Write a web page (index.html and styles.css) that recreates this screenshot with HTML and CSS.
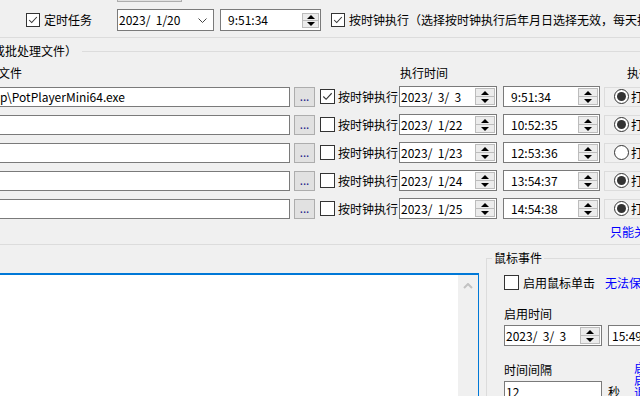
FILE: index.html
```html
<!DOCTYPE html>
<html lang="zh-CN">
<head>
    <meta charset="UTF-8">
    <title>定时任务</title>
    <link rel="stylesheet" href="styles.css">
</head>
<body>
    <div class="window">
        <div class="stub"></div>

        <div class="task-row">
            <label class="check top-check">
                <span class="box small checked"><svg viewBox="0 0 14 14"><polyline points="2.5,7 5.5,10 11.5,3.5"/></svg></span>
                定时任务
            </label>
            <div class="field top-date">
                <span class="val">2023/  1/20</span>
                <svg class="chevron" viewBox="0 0 9 5"><polyline points="0.5,0.5 4.5,4.5 8.5,0.5"/></svg>
            </div>
            <div class="field top-time">
                <span class="val right">9:51:34</span>
                <span class="spin small"><i class="up"></i><i class="down"></i></span>
            </div>
            <label class="check clock-check">
                <span class="box small checked"><svg viewBox="0 0 14 14"><polyline points="2.5,7 5.5,10 11.5,3.5"/></svg></span>
                按时钟执行（选择按时钟执行后年月日选择无效，每天按指定时间执行）
            </label>
        </div>

        <div class="group-edge"></div>

        <div class="group-title">
            <span class="title-text">或批处理文件）</span>
            <span class="title-line"></span>
        </div>

        <div class="head-row">
            <span class="h-file">文件</span>
            <span class="h-time">执行时间</span>
            <span class="h-run">执行方式</span>
        </div>

        <div class="rows">
            <div class="row">
                <div class="field file"><span class="val">p\PotPlayerMini64.exe</span></div>
                <button class="browse">...</button>
                <label class="check row-check">
                    <span class="box checked"><svg viewBox="0 0 14 14"><polyline points="2.5,7 5.5,10 11.5,3.5"/></svg></span>
                    按时钟执行
                </label>
                <div class="field date"><span class="val">2023/  3/  3</span><span class="spin"><i class="up"></i><i class="down"></i></span></div>
                <div class="field time"><span class="val right">9:51:34</span><span class="spin"><i class="up"></i><i class="down"></i></span></div>
                <div class="radio-cell"><span class="radio on"></span>打开</div>
            </div>
            <div class="row">
                <div class="field file"><span class="val"></span></div>
                <button class="browse">...</button>
                <label class="check row-check"><span class="box"></span>按时钟执行</label>
                <div class="field date"><span class="val">2023/  1/22</span><span class="spin"><i class="up"></i><i class="down"></i></span></div>
                <div class="field time"><span class="val right">10:52:35</span><span class="spin"><i class="up"></i><i class="down"></i></span></div>
                <div class="radio-cell"><span class="radio on"></span>打开</div>
            </div>
            <div class="row">
                <div class="field file"><span class="val"></span></div>
                <button class="browse">...</button>
                <label class="check row-check"><span class="box"></span>按时钟执行</label>
                <div class="field date"><span class="val">2023/  1/23</span><span class="spin"><i class="up"></i><i class="down"></i></span></div>
                <div class="field time"><span class="val right">12:53:36</span><span class="spin"><i class="up"></i><i class="down"></i></span></div>
                <div class="radio-cell"><span class="radio"></span>打开</div>
            </div>
            <div class="row">
                <div class="field file"><span class="val"></span></div>
                <button class="browse">...</button>
                <label class="check row-check"><span class="box"></span>按时钟执行</label>
                <div class="field date"><span class="val">2023/  1/24</span><span class="spin"><i class="up"></i><i class="down"></i></span></div>
                <div class="field time"><span class="val right">13:54:37</span><span class="spin"><i class="up"></i><i class="down"></i></span></div>
                <div class="radio-cell"><span class="radio on"></span>打开</div>
            </div>
            <div class="row">
                <div class="field file"><span class="val"></span></div>
                <button class="browse">...</button>
                <label class="check row-check"><span class="box"></span>按时钟执行</label>
                <div class="field date"><span class="val">2023/  1/25</span><span class="spin"><i class="up"></i><i class="down"></i></span></div>
                <div class="field time"><span class="val right">14:54:38</span><span class="spin"><i class="up"></i><i class="down"></i></span></div>
                <div class="radio-cell"><span class="radio on"></span>打开</div>
            </div>
        </div>

        <div class="note"><span class="link">只能关闭</span></div>

        <div class="group-edge bottom-edge"></div>

        <div class="lower">
            <div class="log">
                <div class="scrollbar">
                    <svg class="scroll-up" viewBox="0 0 10 6"><polyline points="1,5 5,1 9,5"/></svg>
                </div>
            </div>

            <div class="mouse-group">
                <span class="legend">鼠标事件</span>
                <div class="mouse-check">
                    <label class="check"><span class="box"></span>启用鼠标单击</label>
                    <span class="link warn">无法保存</span>
                </div>
                <div class="label start-label">启用时间</div>
                <div class="pair">
                    <div class="field date"><span class="val">2023/  3/  3</span><span class="spin"><i class="up"></i><i class="down"></i></span></div>
                    <div class="field time-cut"><span class="val">15:49:20</span></div>
                </div>
                <div class="interval">
                    <div class="interval-main">
                        <div class="label">时间间隔</div>
                        <div class="pair">
                            <div class="field date"><span class="val">12</span></div>
                            <span class="unit">秒</span>
                        </div>
                    </div>
                    <span class="link vertical">启启退</span>
                </div>
            </div>
        </div>
    </div>
</body>
</html>
```

FILE: styles.css
```css
body {
    margin: 0;
    font-family: "Noto Sans CJK SC", "Noto Sans", sans-serif;
    font-size: 12px;
    line-height: 14px;
    color: #000;
    background: #f0f0f0;
}
.window {
    width: 640px;
    height: 396px;
    overflow: hidden;
    background: #f0f0f0;
    white-space: nowrap;
}
.stub {
    margin-left: 117px;
    width: 63px;
    height: 1px;
    background: #e1e1e1;
    border: 1px solid #adadad;
    border-top: none;
}

/* generic controls */
.field {
    display: flex;
    align-items: center;
    flex: none;
    box-sizing: border-box;
    height: 21px;
    border: 1px solid #7a7a7a;
    background: #fff;
}
.val {
    flex: 1;
    padding-left: 1px;
    white-space: pre;
}
.val.right {
    flex: none;
    width: 36px;
    margin-left: 6px;
    text-align: right;
}
.check {
    display: flex;
    align-items: center;
    flex: none;
    gap: 4px;
}
.box {
    box-sizing: border-box;
    width: 15px;
    height: 15px;
    border: 1px solid #333;
    background: #fff;
    flex: none;
}
.box.small {
    width: 14px;
    height: 14px;
}
.box svg {
    display: block;
    width: 100%;
    height: 100%;
}
.box svg polyline {
    fill: none;
    stroke: #333;
    stroke-width: 1.2;
}
.spin {
    display: flex;
    flex-direction: column;
    width: 20px;
    height: 17px;
    margin-left: auto;
    margin-right: 1px;
    flex: none;
}
.spin.small {
    width: 17px;
    height: 15px;
}
.spin i {
    flex: 1;
    display: flex;
    align-items: center;
    justify-content: center;
    background: #ececec;
    border: 1px solid #bcbcbc;
}
.spin i + i {
    border-top: none;
}
.spin i::before {
    content: "";
    border-left: 4px solid transparent;
    border-right: 4px solid transparent;
}
.spin .up::before {
    border-bottom: 4px solid #000;
}
.spin .down::before {
    border-top: 4px solid #000;
}
.link {
    color: #0000ff;
}

/* top row */
.task-row {
    display: flex;
    align-items: center;
    height: 22px;
    margin-top: 7px;
}
.top-check {
    margin-left: 26px;
    width: 91px;
}
.top-date {
    width: 97px;
    height: 22px;
}
.top-date .val {
    flex: none;
}
.chevron {
    width: 9px;
    height: 5px;
    margin: 0 6px 0 auto;
}
.chevron polyline {
    fill: none;
    stroke: #444;
    stroke-width: 1;
}
.top-time {
    width: 101px;
    height: 22px;
    margin-left: 6px;
}
.clock-check {
    margin-left: 10px;
}

.group-edge {
    height: 1px;
    background: #dcdcdc;
    margin-top: 6px;
}
.group-title {
    display: flex;
    align-items: center;
    margin-top: 6px;
}
.title-text {
    flex: none;
    margin-left: -7px;
}
.title-line {
    flex: 1;
    height: 1px;
    margin-left: 5px;
    background: #dcdcdc;
}

/* batch rows */
.head-row {
    display: flex;
    margin-top: 8px;
}
.head-row span {
    flex: none;
}
.h-file {
    margin-left: -2px;
}
.h-time {
    margin-left: 378px;
}
.h-run {
    margin-left: 179px;
}
.rows {
    display: flex;
    flex-direction: column;
    gap: 7px;
    margin-top: 6px;
    margin-left: -10px;
}
.row {
    display: flex;
    align-items: center;
    height: 21px;
}
.file {
    width: 300px;
    height: 20px;
}
.file .val {
    padding-left: 9px;
}
.browse {
    flex: none;
    width: 21px;
    height: 20px;
    margin-left: 4px;
    padding: 0 0 3px;
    border: 1px solid #adadad;
    background: #e1e1e1;
    color: #1c1c8a;
    font: 12px/1 "Noto Sans", sans-serif;
    display: flex;
    align-items: flex-end;
    justify-content: center;
}
.row-check {
    margin-left: 5px;
    width: 79px;
    gap: 3px;
}
.date {
    width: 98px;
}
.time {
    width: 97px;
    margin-left: 6px;
}
.radio-cell {
    display: flex;
    align-items: center;
    gap: 2px;
    flex: none;
    width: 60px;
    height: 20px;
    box-sizing: border-box;
    margin-left: 4px;
    padding-left: 9px;
    border: 1px solid #dcdcdc;
}
.radio {
    box-sizing: border-box;
    flex: none;
    width: 15px;
    height: 15px;
    border: 1px solid #333;
    border-radius: 50%;
    background: #fff;
    display: flex;
    align-items: center;
    justify-content: center;
}
.radio.on::before {
    content: "";
    width: 9px;
    height: 9px;
    border-radius: 50%;
    background: #333;
}
.note {
    margin-top: 6px;
    padding-left: 610px;
}
.bottom-edge {
    margin-top: 5px;
}

/* lower part */
.lower {
    display: flex;
    align-items: flex-start;
}
.log {
    position: relative;
    flex: none;
    box-sizing: border-box;
    width: 481px;
    height: 140px;
    margin-top: 28px;
    margin-left: -2px;
    border: 1px solid #0078d7;
    border-top-width: 2px;
    background: #fff;
}
.scrollbar {
    position: absolute;
    top: 0;
    right: 0;
    bottom: 0;
    width: 20px;
    background: #f0f0f0;
}
.scroll-up {
    display: block;
    width: 10px;
    height: 6px;
    margin: 8px auto 0;
}
.scroll-up polyline {
    fill: none;
    stroke: #c2c2c2;
    stroke-width: 2;
}
.mouse-group {
    flex: none;
    width: 160px;
    margin-top: 13px;
    margin-left: 7px;
    height: 160px;
    padding-left: 17px;
    border-top: 1px solid #dcdcdc;
    border-left: 1px solid #dcdcdc;
}
.legend {
    display: block;
    width: fit-content;
    margin: -8px 0 0 -12px;
    padding: 0 2px;
    background: #f0f0f0;
}
.mouse-check {
    display: flex;
    align-items: center;
    margin-top: 10px;
}
.warn {
    flex: none;
    margin-left: 10px;
}
.label {
    line-height: 14px;
}
.start-label {
    margin-top: 17px;
}
.pair {
    display: flex;
    align-items: center;
    gap: 6px;
    margin-top: 4px;
}
.time-cut {
    width: 60px;
}
.time-cut .val {
    padding-left: 3px;
}
.interval {
    display: flex;
    align-items: flex-start;
    margin-top: 17px;
}
.interval-main {
    flex: none;
}
.unit {
    flex: none;
}
.vertical {
    flex: none;
    width: 12px;
    margin: -1px 0 0 14px;
    white-space: normal;
    line-height: 12px;
}
```
